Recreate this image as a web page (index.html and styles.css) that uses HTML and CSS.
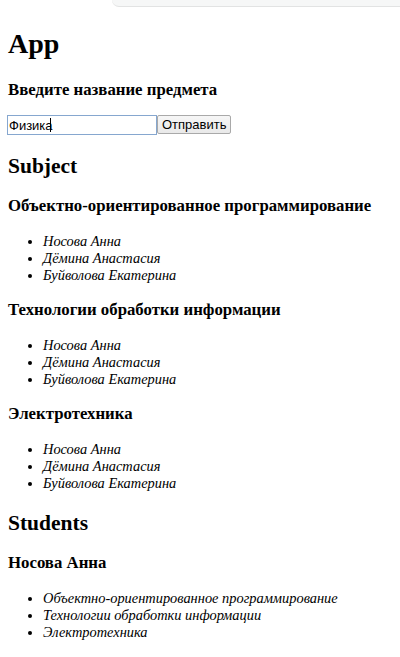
FILE: index.html
```html
<!DOCTYPE html>
<html lang="ru">
<head>
<meta charset="utf-8">
<title>App</title>
<link rel="stylesheet" href="styles.css">
</head>
<body>
<div class="topbar"></div>
<div class="app">
  <h1 class="title">App</h1>
  <h4 class="label">Введите название предмета</h4>
  <form class="form">
    <span class="field-wrap"><input class="field" type="text" value="Физика"><span class="caret"></span></span><button class="send" type="button">Отправить</button>
  </form>
  <h2 class="section">Subject</h2>
  <h4 class="item-title">Объектно-ориентированное программирование</h4>
  <ul class="list">
    <li>Носова Анна</li>
    <li>Дёмина Анастасия</li>
    <li>Буйволова Екатерина</li>
  </ul>
  <h4 class="item-title">Технологии обработки информации</h4>
  <ul class="list">
    <li>Носова Анна</li>
    <li>Дёмина Анастасия</li>
    <li>Буйволова Екатерина</li>
  </ul>
  <h4 class="item-title">Электротехника</h4>
  <ul class="list">
    <li>Носова Анна</li>
    <li>Дёмина Анастасия</li>
    <li>Буйволова Екатерина</li>
  </ul>
  <h2 class="section">Students</h2>
  <h4 class="item-title">Носова Анна</h4>
  <ul class="list">
    <li>Объектно-ориентированное программирование</li>
    <li>Технологии обработки информации</li>
    <li>Электротехника</li>
  </ul>
</div>
</body>
</html>
```

FILE: styles.css
```css
html, body {
  margin: 0;
  padding: 0;
  background: #fff;
}
body {
  font-family: "Liberation Serif", "Times New Roman", serif;
  color: #000;
  overflow: hidden;
}
.topbar {
  height: 6px;
  margin-left: 112px;
  background: #f6f7f7;
  border-bottom: 1px solid #e2e3e3;
  border-bottom-left-radius: 10px;
}
.app {
  padding: 0 8px;
}
.title {
  font-size: 28px;
  line-height: 32px;
  font-weight: bold;
  margin: 21px 0 20px;
}
.label {
  font-size: 16.8px;
  line-height: 19px;
  font-weight: bold;
  margin: 0 0 16px;
}
.form {
  display: flex;
  align-items: flex-start;
  margin: 0 0 16px;
  height: 20px;
}
.field-wrap {
  position: relative;
  display: block;
}
.field {
  box-sizing: border-box;
  width: 150px;
  height: 20px;
  margin: 0 0 0 -1px;
  padding: 0 1px;
  border: 1px solid #86a7cf;
  outline: none;
  font-family: "Liberation Sans", Arial, sans-serif;
  font-size: 13px;
  color: #000;
  background: #fff;
  display: block;
}
.caret {
  position: absolute;
  left: 42px;
  top: 3px;
  width: 1px;
  height: 14px;
  background: #000;
}
.send {
  box-sizing: border-box;
  width: 74px;
  height: 19px;
  margin: 0;
  padding: 0 4px;
  border: 1px solid #a9a9a9;
  border-radius: 2px;
  background: linear-gradient(#f6f6f6, #e9e9e9);
  font-family: "Liberation Sans", Arial, sans-serif;
  font-size: 13px;
  color: #000;
  display: block;
}
.section {
  font-size: 21.5px;
  line-height: 24px;
  font-weight: bold;
  margin: 0 0 18px;
  padding-top: 3px;
}
.item-title {
  font-size: 16.8px;
  line-height: 19px;
  font-weight: bold;
  margin: 0 0 18px;
}
.list {
  margin: 0 0 16px;
  padding-left: 35px;
  font-size: 14.4px;
  line-height: 17px;
}
.list li {
  font-style: italic;
}
```
